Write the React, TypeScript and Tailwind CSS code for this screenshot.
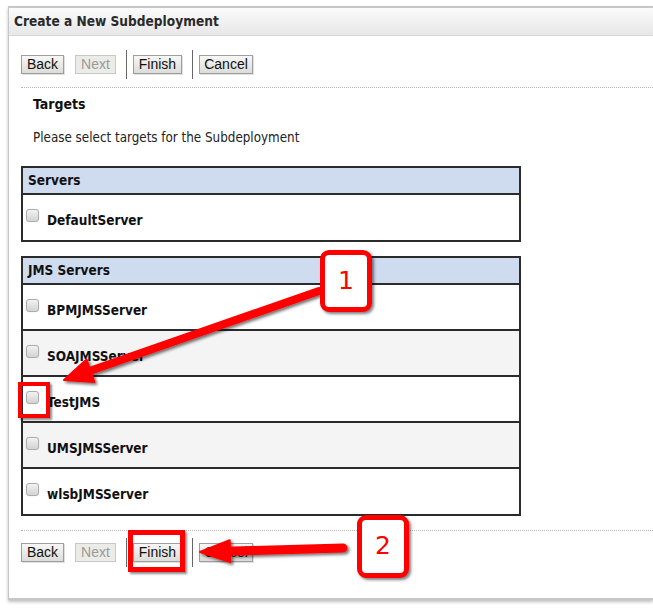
import React from 'react';

const body = "font-['DejaVu_Sans_Condensed','DejaVu_Sans',sans-serif]";

type Btn = { label: string; disabled?: boolean; w: string };

const buttons: (Btn | 'sep')[] = [
  { label: 'Back', w: 'w-[43px]' },
  { label: 'Next', w: 'w-[41px]', disabled: true },
  'sep',
  { label: 'Finish', w: 'w-[49px]' },
  'sep',
  { label: 'Cancel', w: 'w-[54px]' },
];

const ButtonBar = () => (
  <div className="flex items-center h-[29px]">
    {buttons.map((b, i) =>
      b === 'sep' ? (
        <div key={i} className="w-px h-[29px] bg-[#666] ml-[10px] mr-[6px]" />
      ) : (
        <div
          key={i}
          className={`${b.w} h-[19px] flex items-center justify-center border text-[14px] font-['Liberation_Sans',Arial,sans-serif] ${
            b.disabled
              ? 'ml-[11px] border-[#c8c8c8] bg-[#ebebe8] text-[#9a9a9a]'
              : 'border-[#9e9e9e] bg-gradient-to-b from-[#f7f7f5] to-[#dcdcd8] text-[#111] shadow-[1px_1px_0_rgba(0,0,0,0.12)]'
          }`}
        >
          {b.label}
        </div>
      )
    )}
  </div>
);

const Checkbox = () => (
  <span className="block w-[13px] h-[13px] rounded-[3px] border border-[#adadad] bg-gradient-to-b from-[#f2f2f2] to-[#d3d3d3] shadow-[0_0_1px_rgba(0,0,0,0.2)]" />
);

const Table = ({ title, rows }: { title: string; rows: string[] }) => (
  <div className="w-[500px] border-2 border-[#2b2b2b]">
    <div className="h-[27px] border-b-2 border-[#2b2b2b] bg-[#cfdbee] pl-[5px] flex items-center text-[13.5px] font-bold text-[#111]">
      {title}
    </div>
    {rows.map((r, i) => (
      <div
        key={r}
        className={`flex items-start pt-[14px] pl-[3px] ${i < rows.length - 1 ? 'h-[46px] border-b-2 border-[#2b2b2b]' : 'h-[45px]'} ${
          i % 2 === 1 ? 'bg-[#f4f4f4]' : 'bg-white'
        }`}
      >
        <Checkbox />
        <span className="ml-[8px] mt-[3px] leading-[17px] text-[13.5px] font-bold text-[#111]">{r}</span>
      </div>
    ))}
  </div>
);

function arrowParts(tx: number, ty: number, px: number, py: number, hl: number, hw: number) {
  const dx = px - tx;
  const dy = py - ty;
  const len = Math.hypot(dx, dy);
  const ux = dx / len;
  const uy = dy / len;
  const bx = px - ux * hl;
  const by = py - uy * hl;
  const nx = -uy;
  const ny = ux;
  return {
    line: { x1: tx, y1: ty, x2: bx + ux * 4, y2: by + uy * 4 },
    head: `${px},${py} ${bx + nx * hw},${by + ny * hw} ${bx - nx * hw},${by - ny * hw}`,
  };
}

const Arrow = ({ t, p, w, hl, hw }: { t: [number, number]; p: [number, number]; w: number; hl: number; hw: number }) => {
  const a = arrowParts(t[0], t[1], p[0], p[1], hl, hw);
  return (
    <g filter="url(#shadow)">
      <line {...a.line} stroke="#ff0000" strokeWidth={w} strokeLinecap="round" />
      <polygon points={a.head} fill="#ff0000" stroke="#ff0000" strokeWidth={2} strokeLinejoin="round" />
    </g>
  );
};

export default function App() {
  return (
    <div className={`relative w-[653px] h-[611px] bg-white overflow-hidden ${body}`}>
      <div className="ml-[8px] mt-[6px] w-[645px] h-[594px] border-t-2 border-l border-b-2 border-[#c6c6c6] shadow-[0_2px_3px_rgba(0,0,0,0.25)]">
        <div className="h-[28px] border-b border-[#d8d8d8] bg-gradient-to-b from-[#fbfbfb] to-[#e7e7e7] pl-[5px] flex items-center text-[13.6px] font-bold text-[#2a2a2a]">
          Create a New Subdeployment
        </div>
        <div className="pl-[12px]">
          <div className="mt-[14px]">
            <ButtonBar />
          </div>
          <div className="mt-[8px] border-t border-dotted border-[#b5b5b5]" />
          <div className="pl-[12px]">
            <div className="mt-[8px] leading-[17px] text-[14px] font-bold text-[#111]">Targets</div>
            <div className="mt-[16px] leading-[17px] text-[13.3px] text-[#222]">Please select targets for the Subdeployment</div>
          </div>
          <div className="mt-[20px]">
            <Table title="Servers" rows={['DefaultServer']} />
          </div>
          <div className="mt-[14px]">
            <Table title="JMS Servers" rows={['BPMJMSServer', 'SOAJMSServer', 'TestJMS', 'UMSJMSServer', 'wlsbJMSServer']} />
          </div>
          <div className="mt-[14px] border-t border-dotted border-[#b5b5b5]" />
          <div className="mt-[7px]">
            <ButtonBar />
          </div>
        </div>
      </div>

      {/* annotations */}
      <svg className="absolute inset-0 pointer-events-none" width={653} height={611}>
        <defs>
          <filter id="shadow" x="-20%" y="-50%" width="140%" height="200%">
            <feDropShadow dx={2} dy={2} stdDeviation={1.5} floodColor="#000" floodOpacity={0.55} />
          </filter>
        </defs>
        <Arrow t={[319, 291]} p={[64, 380]} w={8} hl={28} hw={12} />
        <Arrow t={[343, 548]} p={[200, 552]} w={9} hl={30} hw={11} />
      </svg>

      <div className="absolute left-[18px] top-[382px] w-[32px] h-[36px] border-4 border-[#ff0000] shadow-[2px_2px_2px_rgba(0,0,0,0.45)]" />
      <div className="absolute left-[128px] top-[530px] w-[57px] h-[42px] border-[5px] border-[#ff0000] shadow-[2px_2px_2px_rgba(0,0,0,0.45)]" />

      <div className="absolute left-[320px] top-[250px] w-[52px] h-[62px] border-[5px] border-[#ff0000] rounded-[9px] bg-white flex items-center justify-center shadow-[2px_2px_3px_rgba(0,0,0,0.5)]">
        <span className="text-[25px] leading-none text-[#ff0000] font-['DejaVu_Sans',sans-serif] mt-[-2px]">1</span>
      </div>
      <div className="absolute left-[357px] top-[515px] w-[52px] h-[63px] border-[5px] border-[#ff0000] rounded-[9px] bg-white flex items-center justify-center shadow-[2px_2px_3px_rgba(0,0,0,0.5)]">
        <span className="text-[25px] leading-none text-[#ff0000] font-['DejaVu_Sans',sans-serif] mt-[-2px]">2</span>
      </div>
    </div>
  );
}
